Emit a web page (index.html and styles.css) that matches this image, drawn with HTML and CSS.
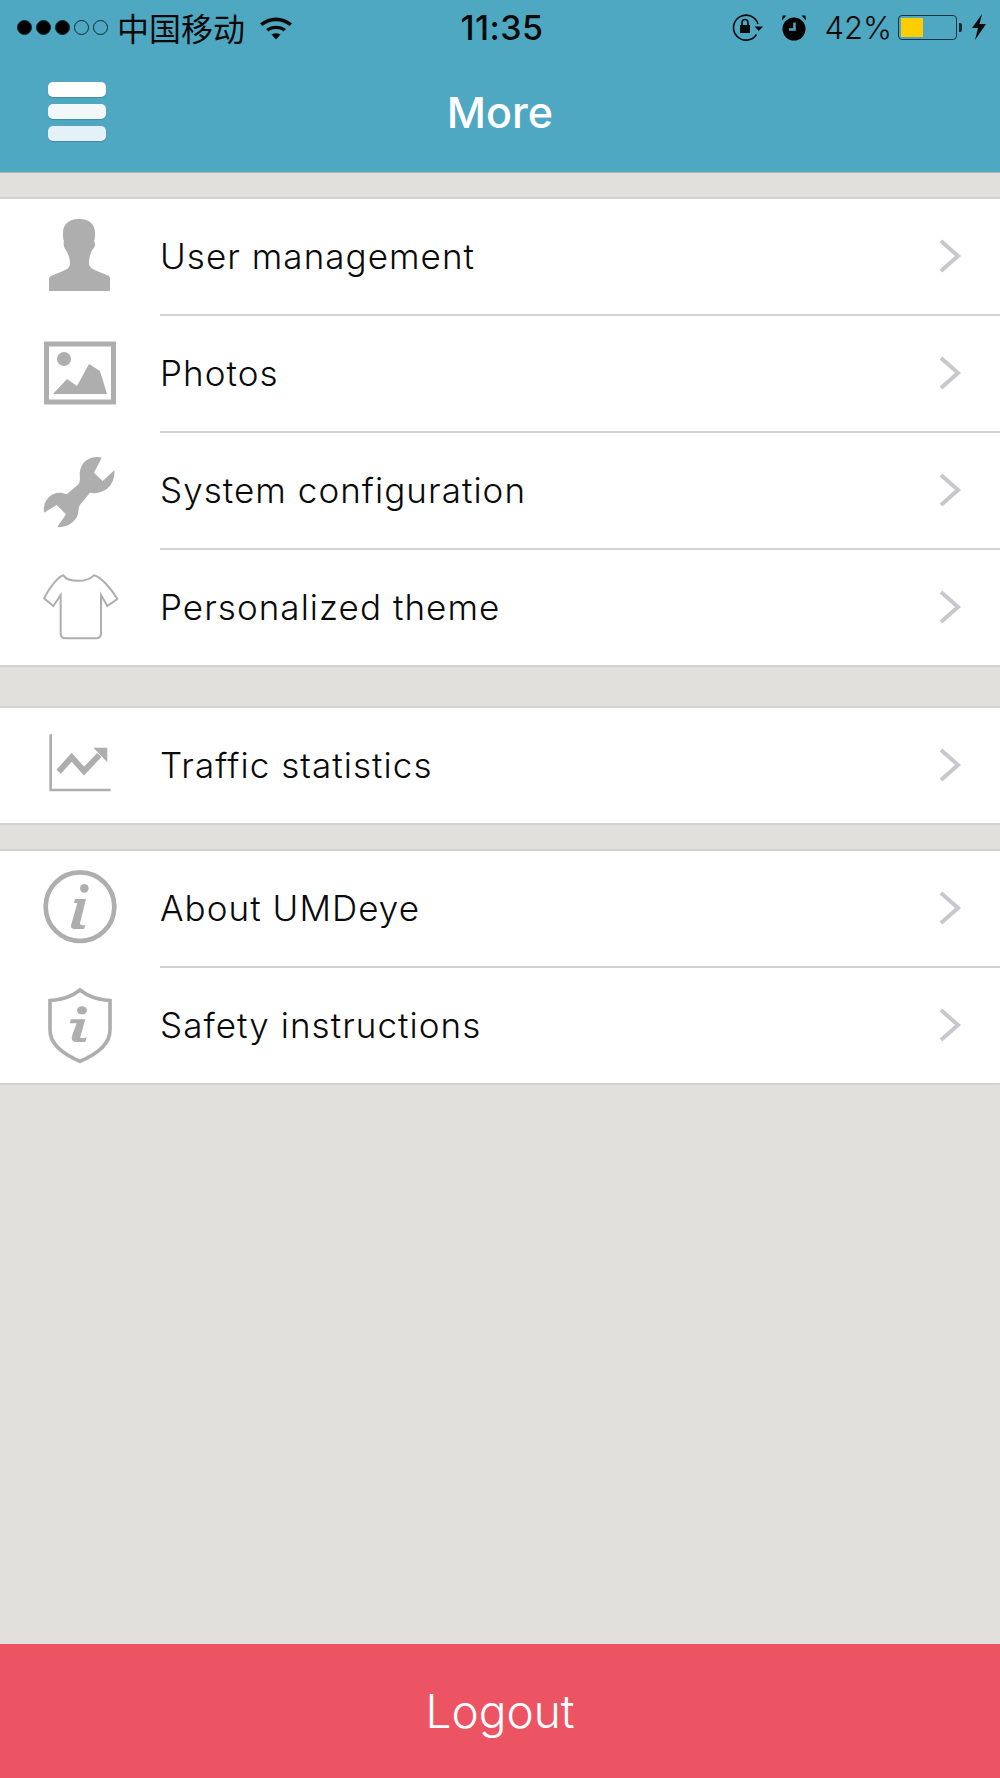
FILE: index.html
```html
<!DOCTYPE html>
<html lang="en">
  <head>
    <meta charset="UTF-8" />
    <meta name="viewport" content="width=device-width, initial-scale=1.0" />
    <title>More</title>
    <link rel="stylesheet" href="styles.css">
  </head>
  <body>
    <header class="top">
      <!-- Status bar -->
      <div class="status">
        <div class="status-left">
          <span class="signal">
            <i class="dot on"></i><i class="dot on"></i><i class="dot on"></i><i class="dot"></i><i class="dot"></i>
          </span>
          <span class="carrier">中国移动</span>
          <svg class="wifi" width="34" height="25" viewBox="0 0 34 25">
            <path d="M1 8.5C10 .5 24 .5 33 8.5L30.5 11C23 4.5 11 4.5 3.500 11Z" />
            <path d="M7 14C12.500 9.500 21.500 9.500 27 14L24.500 16.500C20.500 13.300 13.500 13.300 9.500 16.500Z" />
            <path d="M12.500 19.500C15.500 17.800 18.500 17.800 21.500 19.500L17 24.500Z" />
          </svg>
        </div>
        <div class="time">11:35</div>
        <div class="status-right">
          <svg class="lock" width="32" height="28" viewBox="0 0 32 28">
            <path class="thin" d="M24.500 21.500A12.500 12.500 0 1 1 26 11" />
            <path d="M22.500 13.500H31L26.800 18Z" />
            <rect x="8" y="12" width="10" height="8" />
            <path class="thin" d="M10 12V9.500A3 3 0 0 1 16 9.500V12" />
          </svg>
          <svg class="alarm" width="26" height="27" viewBox="0 0 26 27">
            <circle cx="13" cy="15" r="11.500" />
            <path class="hands" d="M13.500 8.500V15.500H8" />
            <path d="M1 6.500L5.500 1.500L1.500 1.500Z M25 6.500L20.500 1.500L24.500 1.500Z" />
          </svg>
          <span class="percent">42%</span>
          <span class="battery"><span class="battery-fill"></span></span>
          <span class="battery-tip"></span>
          <svg class="bolt" width="16" height="26" viewBox="0 0 16 26">
            <path d="M11 0L1 14H7L4 26L15 10H8.500Z" />
          </svg>
        </div>
      </div>

      <!-- Nav bar -->
      <div class="nav">
        <div class="menu-btn">
          <span></span>
          <span></span>
          <span></span>
        </div>
        <h1>More</h1>
      </div>
    </header>

    <main>
      <section class="group">
        <div class="row">
          <svg class="icon" viewBox="0 0 80 80">
            <path class="fill" d="M39 2C50 2 55 8 55 16C55 20 55 22 54 24C56 26 55 31 52 33C50 38 49 41 49 46C49 50 52 52 57 54L69 59Q70 60 70 62V74H9V62Q9 60 11 59L23 54C28 52 30 50 30 46C30 41 28 37 26 33C24 31 23 26 24 24C23 22 23 20 23 16C23 8 28 2 39 2Z" />
          </svg>
          <div class="row-body">
            <span>User management</span>
            <svg class="chevron" width="24" height="36" viewBox="0 0 24 36"><path d="M3 3L20 18L3 33" /></svg>
          </div>
        </div>
        <div class="row">
          <svg class="icon" viewBox="0 0 80 80">
            <rect class="line" x="6.500" y="10" width="67" height="58" />
            <circle class="fill" cx="24" cy="25" r="7" />
            <path class="fill" d="M13 60L27 45L37 52L49 30L60 37L67 60Z" />
          </svg>
          <div class="row-body">
            <span>Photos</span>
            <svg class="chevron" width="24" height="36" viewBox="0 0 24 36"><path d="M3 3L20 18L3 33" /></svg>
          </div>
        </div>
        <div class="row">
          <svg class="icon" viewBox="60 60 240 240">
            <path class="fill" d="M245 80C215 72 185 90 180 120C177 140 185 150 172 163L140 190C125 182 100 182 85 200C73 213 70 228 72 245L110 222L138 250L112 287C130 292 160 280 172 255C178 240 172 228 185 215L210 185C230 190 255 182 270 165C280 150 285 135 283 118L248 150L222 125Z" />
          </svg>
          <div class="row-body">
            <span>System configuration</span>
            <svg class="chevron" width="24" height="36" viewBox="0 0 24 36"><path d="M3 3L20 18L3 33" /></svg>
          </div>
        </div>
        <div class="row last">
          <svg class="icon" viewBox="60 411 240 240">
            <path class="line thin-line" d="M130 436C145 458 200 458 222 436C240 440 270 470 292 507L262 528L243 495V610Q243 625 228 625H137Q122 625 122 610V495L100 528L72 505C90 470 115 440 130 436Z" />
          </svg>
          <div class="row-body">
            <span>Personalized theme</span>
            <svg class="chevron" width="24" height="36" viewBox="0 0 24 36"><path d="M3 3L20 18L3 33" /></svg>
          </div>
        </div>
      </section>

      <section class="group group-traffic">
        <div class="row last">
          <svg class="icon" viewBox="60 75 240 240">
            <path class="line axis" d="M92 103V270H272" />
            <path class="line trend" d="M116 215L155 172L192 213L238 165" />
            <path class="fill" d="M220 143H262V187Z" />
          </svg>
          <div class="row-body">
            <span>Traffic statistics</span>
            <svg class="chevron" width="24" height="36" viewBox="0 0 24 36"><path d="M3 3L20 18L3 33" /></svg>
          </div>
        </div>
      </section>

      <section class="group group-about">
        <div class="row">
          <svg class="icon" viewBox="60 90 240 240">
            <circle class="line ring" cx="180" cy="203" r="103" />
            <circle class="fill" cx="193" cy="148" r="13" />
            <path class="fill" d="M165 180H198L180 252Q178 260 196 258L192 270H162Q150 268 154 255L172 192H162Z" />
          </svg>
          <div class="row-body">
            <span>About UMDeye</span>
            <svg class="chevron" width="24" height="36" viewBox="0 0 24 36"><path d="M3 3L20 18L3 33" /></svg>
          </div>
        </div>
        <div class="row last">
          <svg class="icon" viewBox="60 435 240 240">
            <path class="line shield" d="M180 450C205 470 240 480 270 482V570C270 615 225 645 180 664C135 645 90 615 90 570V482C120 480 155 470 180 450Z" />
            <ellipse class="fill" cx="186" cy="511" rx="15" ry="12" />
            <path class="fill" d="M152 538H196L181 590Q179 598 200 592L196 606H168Q150 606 157 585L170 550H150Z" />
          </svg>
          <div class="row-body">
            <span>Safety instructions</span>
            <svg class="chevron" width="24" height="36" viewBox="0 0 24 36"><path d="M3 3L20 18L3 33" /></svg>
          </div>
        </div>
      </section>
    </main>

    <button class="logout">Logout</button>
  </body>
</html>
```

FILE: styles.css
```css
* {
  box-sizing: border-box;
}

body {
  margin: 0;
  height: 1778px;
  display: flex;
  flex-direction: column;
  background-color: #e1e0dc;
  font-family: Inter, "Noto Sans CJK SC", sans-serif;
  color: #111;
}

.top {
  height: 173px;
  background-color: #4fa8c2;
  border-bottom: 1px solid #a9b4b6;
}

.status {
  height: 54px;
  padding: 0 13px 0 17px;
  display: grid;
  grid-template-columns: 1fr auto 1fr;
  align-items: center;
  color: #0a0a0a;
}

.status-left,
.status-right {
  display: flex;
  align-items: center;
}

.status-right {
  justify-content: flex-end;
}

.status svg path,
.status svg rect {
  fill: #0a0a0a;
}

.signal {
  display: flex;
  gap: 4px;
}

.dot {
  display: block;
  width: 15px;
  height: 15px;
  border: 1px solid #0a2a35;
  border-radius: 50%;
}

.dot.on {
  background-color: #000;
}

.carrier {
  margin-left: 9px;
  font-size: 32px;
  font-family: "Noto Sans CJK SC", sans-serif;
  line-height: 40px;
}

.wifi {
  margin-left: 14px;
}

.time {
  font-size: 34px;
  font-weight: 500;
  letter-spacing: 0.4px;
}

.status .lock .thin {
  fill: none;
  stroke: #0a0a0a;
  stroke-width: 1.6;
}

.alarm {
  margin-left: 17px;
}

.status .alarm .hands {
  fill: none;
  stroke: #4fa8c2;
  stroke-width: 2.500;
}

.percent {
  margin-left: 17px;
  font-size: 31px;
  font-weight: 300;
}

.battery {
  margin-left: 6px;
  width: 59px;
  height: 25px;
  padding: 2px;
  border: 1.5px solid #12333f;
  border-radius: 4px;
}

.battery-fill {
  display: block;
  width: 22px;
  height: 100%;
  background-color: #ffcc00;
}

.battery-tip {
  margin-left: 2px;
  width: 3px;
  height: 9px;
  background-color: #0a2a35;
  border-radius: 0 2px 2px 0;
}

.bolt {
  margin-left: 9px;
}

.nav {
  height: 118px;
  position: relative;
  display: flex;
  align-items: center;
  justify-content: center;
}

.nav h1 {
  margin: 0 0 3px;
  font-size: 43px;
  font-weight: 500;
  color: #fff;
}

.menu-btn {
  position: absolute;
  left: 48px;
  top: 28px;
  width: 58px;
  display: flex;
  flex-direction: column;
  gap: 7px;
}

.menu-btn span {
  height: 15px;
  border-radius: 5px;
  background-color: #fff;
  box-shadow: 0 1px 1px rgba(40, 90, 110, 0.35);
}

.menu-btn span:nth-child(2) {
  background-color: #f2f7fa;
}

.menu-btn span:nth-child(3) {
  background-color: #e4f2f7;
}

main {
  flex: 1;
  padding-top: 24px;
}

.group {
  background-color: #fff;
  border-top: 2px solid #d2d2d0;
  border-bottom: 2px solid #d2d2d0;
}

.group-traffic {
  margin-top: 39px;
}

.group-about {
  margin-top: 24px;
}

.row {
  height: 117px;
  display: flex;
  align-items: center;
  padding-left: 40px;
}

.row.last {
  height: 115px;
}

.icon {
  width: 80px;
  height: 80px;
  margin-bottom: 2px;
  flex-shrink: 0;
}

.fill {
  fill: #aeaeae;
}

.line {
  fill: none;
  stroke: #aeaeae;
  stroke-width: 5;
}

.thin-line {
  stroke-width: 6;
}

.axis {
  stroke-width: 8;
}

.trend {
  stroke-width: 18;
}

.ring {
  stroke-width: 14;
}

.shield {
  stroke-width: 11;
}

.row-body {
  flex: 1;
  height: 100%;
  margin-left: 40px;
  padding: 0 38px 2px 0;
  display: flex;
  align-items: center;
  justify-content: space-between;
  font-size: 35px;
  font-weight: 300;
  letter-spacing: 1.05px;
  color: #0a0a0a;
  border-bottom: 2px solid #d2d2d0;
}

.row.last .row-body {
  border-bottom: none;
}

.chevron path {
  fill: none;
  stroke: #c7c7cc;
  stroke-width: 4;
}

.logout {
  height: 134px;
  border: none;
  background-color: #ec5463;
  color: #fff;
  font-family: inherit;
  font-size: 46px;
  font-weight: 300;
}
```
